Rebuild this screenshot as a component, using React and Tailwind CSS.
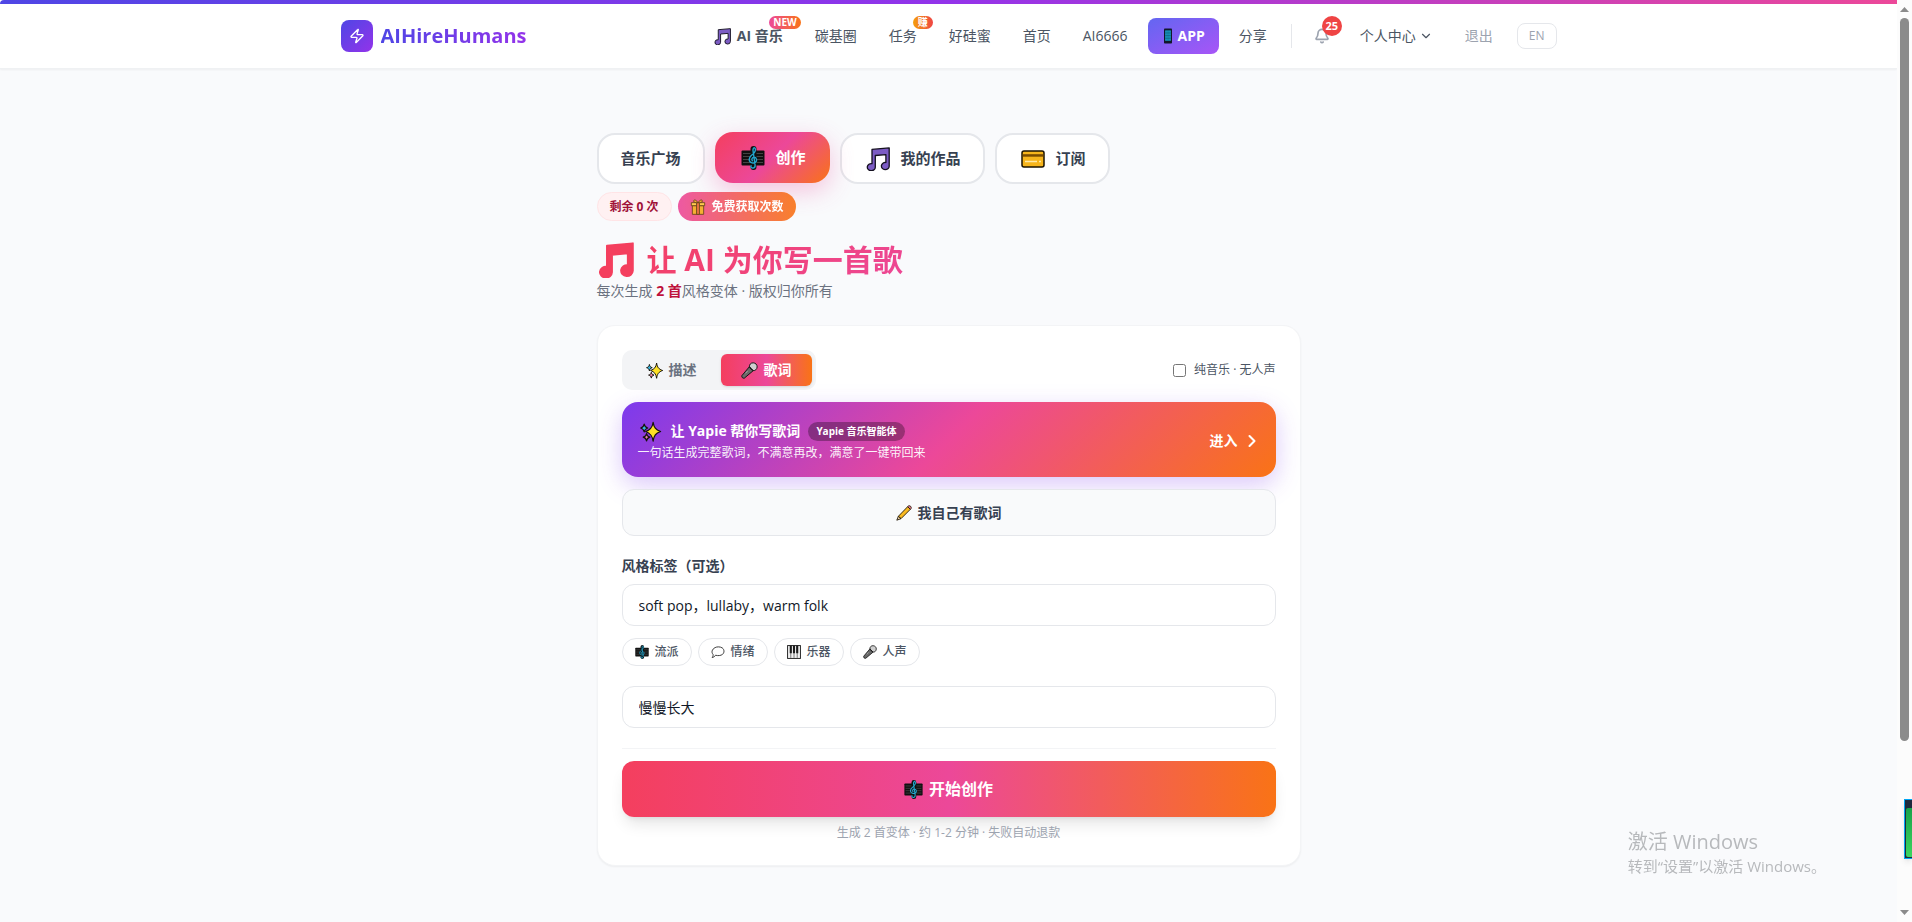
import React, { useState } from 'react';
import { Bell, ChevronDown, ChevronRight, Zap } from 'lucide-react';

/* ---------- icons ---------- */

const NotesIcon = ({ className, fill = '#7c5cc4', stroke = '#14101f' }) => (
  <svg viewBox="0 0 24 24" className={className} fill={fill} stroke={stroke} strokeWidth="1.3" strokeLinejoin="round" aria-hidden="true">
    <path d="M6 2.4 23.2.9v18.3a3.9 3.6 0 1 1-3.3-3.7V7.6L9.3 8.5v11.7a4 3.6 0 1 1-3.3-3.6z" />
  </svg>
);

const ScoreIcon = ({ className }) => (
  <svg viewBox="0 0 24 24" className={className} fill="none" aria-hidden="true">
    <rect x=".5" y="4.5" width="23" height="15" rx="1" fill="#101010" />
    <path d="M2 7.5h20M2 10.5h20M2 13.5h20M2 16.5h20" stroke="#4a4a4a" strokeWidth=".9" />
    <path d="M12.5 3v18" stroke="#101010" strokeWidth="6" strokeLinecap="round" />
    <path
      d="M12.4 22c-2 .3-3-1-2.3-2.2M12.4 22c1.5-.3 1.9-1.4 1.7-3L12 4.5C11.8 2.5 13 1.4 13.9 2c1.2 1.2.5 4.2-2.2 6.3-3 2.4-4 4.3-3.3 6.4.8 2.3 4.3 3.1 6.2 1.5 1.9-1.7.9-4.9-1.5-4.9-2 0-2.9 2-1.7 3.4"
      stroke="#22a6cc"
      strokeWidth="1.4"
      strokeLinecap="round"
    />
  </svg>
);

const CardIcon = ({ className }) => (
  <svg viewBox="0 0 24 24" className={className} aria-hidden="true">
    <rect x="1" y="4" width="22" height="16" rx="2" fill="#f7b51b" stroke="#1c1300" strokeWidth="1.5" />
    <path d="M1.8 7.2h20.4v2.5H1.8z" fill="#7a4c00" />
    <path d="M4 14.5h12M18 14.5h2" stroke="#ffe9a8" strokeWidth="1.5" />
  </svg>
);

const GiftIcon = ({ className }) => (
  <svg viewBox="0 0 24 24" className={className} stroke="#5a3200" strokeWidth="1.3" aria-hidden="true">
    <path d="M3.5 10h17v13h-17z" fill="#f5a81c" />
    <path d="M2 5.5h20V10H2z" fill="#ffc63d" />
    <path d="M9.8 5.5h4.4V23H9.8z" fill="#e8632c" />
    <path d="M12 5.5C9 .5 5 .5 5.5 3.5 6 5.3 9 5.5 12 5.5zm0 0c3-5 7-5 6.500-2C18 5.3 15 5.5 12 5.500z" fill="#f5a81c" />
  </svg>
);

const SparklesIcon = ({ className }) => (
  <svg viewBox="0 0 24 24" className={className} stroke="#16130a" strokeWidth="1.4" strokeLinejoin="round" aria-hidden="true">
    <path d="M15 1.5c1 6 2.8 8.5 8.5 10.5-5.7 2-7.5 4.7-8.5 11-1-6.3-3-9-8.5-11C12 10 14 7.500 15 1.500z" fill="#fde025" />
    <path d="M4.8 3.5c.5 2.8 1.5 3.800 4 4.500-2.500.8-3.500 1.800-4 4.500-.5-2.700-1.500-3.700-4-4.500 2.500-.7 3.500-1.700 4-4.500z" fill="#35b8e6" />
    <path d="M7.5 14.5c.4 2.500 1.400 3.300 3.800 4-2.400.7-3.400 1.600-3.800 4.200-.4-2.600-1.400-3.500-3.800-4.200 2.400-.7 3.400-1.500 3.800-4z" fill="#f07fa8" />
  </svg>
);

const MicIcon = ({ className }) => (
  <svg viewBox="0 0 24 24" className={className} stroke="#141414" strokeWidth="1.4" strokeLinejoin="round" aria-hidden="true">
    <path d="M12 6.5 1.2 19.3c-.5 2.3 1.2 4 3.5 3.5L17.5 12z" fill="#6a6a6a" />
    <path d="M12 6.8C11.5 3.5 14 1 17.3 1.2c3.3.2 5.5 2.5 5.5 5.7-.2 3.3-2.7 5.7-5.6 5.200z" fill="#cfcfcf" />
    <path d="M12 6.8c1 2.5 2.6 4.200 5.200 5.300" fill="none" />
    <path d="m9.5 12.500-3 3.500" stroke="#a3a3a3" />
  </svg>
);

const PencilIcon = ({ className }) => (
  <svg viewBox="0 0 24 24" className={className} stroke="#1c1405" strokeWidth="1.3" strokeLinejoin="round" aria-hidden="true">
    <path d="M3.5 17 17.5 2.5l4 4L7.5 20.5z" fill="#f9b91f" />
    <path d="m17.5 2.5 1-1c2.500-1.500 5.500 1.500 4 4l-1 1z" fill="#ee7f93" />
    <path d="m3.5 17-2.300 5.800 6.300-2.300z" fill="#f1d3a5" />
  </svg>
);

const BubbleIcon = ({ className }) => (
  <svg viewBox="0 0 24 24" className={className} fill="#fff" stroke="#303030" strokeWidth="1.6" strokeLinejoin="round" aria-hidden="true">
    <path d="M7 4.500c3-1.800 9-1.800 12.300.5 3.700 2.800 4 8 .5 11-2.800 2.300-8 2.800-12 1.500-1 1.800-3 3.500-5.800 4 1.500-2 1.800-3.300 1.500-5.500C.3 12.700 1.500 7.300 7 4.500z" />
  </svg>
);

const PianoIcon = ({ className }) => (
  <svg viewBox="0 0 24 24" className={className} aria-hidden="true">
    <rect x="1" y="1" width="22" height="22" fill="#f1f1f1" stroke="#1b1b1b" strokeWidth="1.6" />
    <path d="M6.5 2v20M12 2v20M17.5 2v20" stroke="#444" strokeWidth="1.2" />
    <path d="M4.7 1h3.600v13H4.700zM10.200 1h3.600v13h-3.600zM15.700 1h3.600v13h-3.600z" fill="#1b1b1b" />
  </svg>
);

const PhoneIcon = ({ className }) => (
  <svg viewBox="0 0 12 20" className={className} aria-hidden="true">
    <rect x="1" y=".5" width="10" height="19" rx="1" fill="#10182b" />
    <rect x="2.5" y="3" width="7" height="13" fill="#18a5cf" />
    <path d="M2.5 6.2h7M2.5 9.5h7M2.5 12.8h7M4.8 3v13M7.2 3v13" stroke="#10506e" strokeWidth=".7" />
  </svg>
);

/* ---------- data ---------- */

const tabs = [
  { id: 'plaza', label: '音乐广场' },
  { id: 'create', label: '创作', Icon: ScoreIcon },
  { id: 'works', label: '我的作品', Icon: NotesIcon },
  { id: 'plan', label: '订阅', Icon: CardIcon },
];

const chips = [
  { label: '流派', Icon: ScoreIcon },
  { label: '情绪', Icon: BubbleIcon },
  { label: '乐器', Icon: PianoIcon },
  { label: '人声', Icon: MicIcon },
];

const navLink = 'relative px-3 py-2 text-[#4b5563]';

const Header = () => (
  <header className="bg-white border-b border-gray-200/60 shadow-xs">
    <div className="h-1 rounded-tl-md bg-linear-to-r/srgb from-[#4f46e5] via-[#9333ea] to-[#ec4899]" />
    <div className="max-w-7xl h-16 mx-auto px-8 flex items-center justify-between">
      <a href="#" className="flex items-center gap-2">
        <span className="w-8 h-8 rounded-lg bg-linear-to-br/srgb from-[#4f46e5] to-[#9333ea] flex items-center justify-center">
          <Zap size={16} className="text-white" />
        </span>
        <span className="text-xl leading-8 font-bold bg-linear-to-r/srgb from-[#4f46e5] to-[#9333ea] bg-clip-text text-transparent">
          AIHireHumans
        </span>
      </a>

      <nav className="flex items-center text-sm leading-5 whitespace-nowrap">
        <div className="flex items-center gap-2">
          <a href="#" className={`${navLink} flex items-center gap-[6px] font-bold`}>
            <NotesIcon className="w-[17px] h-[17px]" />
            AI 音乐
            <span className="absolute right-[-6px] top-[-2px] h-[13px] px-1 rounded-full bg-linear-to-r/srgb from-[#ec4899] to-[#f97316] text-white text-[10px] leading-[13px] font-bold">
              NEW
            </span>
          </a>
          <a href="#" className={navLink}>碳基圈</a>
          <a href="#" className={navLink}>
            任务
            <span className="absolute right-[-4px] top-[-2px] h-[13px] px-[5px] rounded-full bg-linear-to-r/srgb from-[#f59e0b] to-[#ef4444] text-white text-[10px] leading-[13px] font-bold">
              赚
            </span>
          </a>
          <a href="#" className={navLink}>好硅蜜</a>
          <a href="#" className={navLink}>首页</a>
          <a href="#" className={navLink}>AI6666</a>
          <a href="#" className="h-9 px-[14px] rounded-lg bg-linear-to-br/srgb from-[#6366f1] to-[#a855f7] text-white font-bold flex items-center gap-1">
            <PhoneIcon className="w-3 h-4" />
            APP
          </a>
          <a href="#" className={navLink}>分享</a>
        </div>
        <div className="ml-3 pl-[22px] h-6 border-l border-gray-200 flex items-center">
          <button type="button" aria-label="通知" className="relative text-[#9ca3af]">
            <Bell size={16} strokeWidth={2.5} />
            <span className="absolute left-2 top-[-12px] w-5 h-5 rounded-full bg-[#ef4444] text-white text-[11px] leading-5 font-bold text-center">
              25
            </span>
          </button>
          <button type="button" className="ml-[30px] flex items-center gap-[3px] text-[#4b5563]">
            个人中心
            <ChevronDown size={14} />
          </button>
          <button type="button" className="ml-8 text-[#9ca3af]">退出</button>
          <button type="button" className="ml-6 h-[26px] px-[11px] rounded-lg border border-gray-200 text-xs text-[#9ca3af]">
            EN
          </button>
        </div>
      </nav>
    </div>
  </header>
);

const Scrollbar = () => (
  <div className="w-[15px] h-screen shrink-0 bg-[#fcfcfc] flex flex-col items-center justify-between py-[7px]">
    <svg viewBox="0 0 9 5" className="w-[9px] h-[5px]" fill="#8b8b8b"><path d="M4.5 0 9 5H0z" /></svg>
    <div className="flex-1 mt-[6px] w-[9px]">
      <div className="h-[81%] rounded-full bg-[#8b8b8b]" />
    </div>
    <svg viewBox="0 0 9 5" className="w-[9px] h-[5px]" fill="#8b8b8b"><path d="M0 0h9L4.5 5z" /></svg>
  </div>
);

const App = () => {
  const [tab, setTab] = useState('create');
  const [mode, setMode] = useState('lyrics');
  const [instrumental, setInstrumental] = useState(false);
  const [style, setStyle] = useState('soft pop，lullaby，warm folk');
  const [title, setTitle] = useState('慢慢长大');

  const modeClass = (id) =>
    `h-8 px-5 rounded-md flex items-center gap-[6px] text-sm font-bold ${
      mode === id
        ? 'bg-linear-to-r/srgb from-[#f43f5e] via-[#ec4899] to-[#f97316] text-white shadow-sm'
        : 'text-[#6b7280]'
    }`;

  return (
    <div className="flex h-screen overflow-hidden bg-[#f9fafc] font-['Open_Sans','Noto_Sans_CJK_SC',sans-serif]">
      <div className="flex-1 min-w-0">
        <Header />

        <main className="max-w-3xl mx-auto px-8 pt-16">
          <div className="flex gap-[10px]">
            {tabs.map(({ id, label, Icon }) => (
              <button
                key={id}
                type="button"
                onClick={() => setTab(id)}
                className={`h-[51px] rounded-[18px] flex items-center gap-[9px] text-[15px] font-bold ${
                  tab === id
                    ? 'px-6 -translate-y-px bg-linear-135/srgb from-[#f43f5e] via-[#ec4899] to-[#f97316] text-white shadow-[0_8px_24px_rgba(236,72,153,0.3)]'
                    : 'px-[22px] border-2 border-gray-200 bg-white text-[#374151]'
                }`}
              >
                {Icon && (
                  <span className="w-7 flex justify-center">
                    <Icon className="w-6 h-6" />
                  </span>
                )}
                {label}
              </button>
            ))}
          </div>

          <div className="mt-2 flex gap-[6px] text-xs font-bold">
            <span className="h-[29px] px-3 rounded-full border border-[#ffe4e6] bg-[#fff1f2] text-[#9f1239] flex items-center">
              剩余 0 次
            </span>
            <button type="button" className="h-[29px] px-3 rounded-full bg-linear-to-r/srgb from-[#ec4899] to-[#f97316] text-white opacity-90 flex items-center gap-[6px]">
              <GiftIcon className="w-4 h-4" />
              免费获取次数
            </button>
          </div>

          <h1 className="mt-5 text-3xl leading-[38px] font-bold flex items-center gap-3 bg-linear-135/srgb from-[#f43f5e] via-[#ec4899] to-[#f97316] bg-clip-text text-transparent">
            <NotesIcon className="w-[38px] h-9" fill="#f43f5e" stroke="#f43f5e" />
            让 AI 为你写一首歌
          </h1>
          <p className="text-sm leading-6 text-[#6b7280]">
            每次生成 <strong className="text-[#be123c]">2 首</strong>风格变体 · 版权归你所有
          </p>

          <section className="mt-[22px] p-6 rounded-[18px] border border-gray-100 bg-white shadow-xs">
            <div className="flex items-center justify-between">
              <div className="p-1 rounded-[10px] bg-[#f3f4f6] flex gap-1">
                <button type="button" onClick={() => setMode('describe')} className={modeClass('describe')}>
                  <SparklesIcon className="w-[17px] h-[17px]" />
                  描述
                </button>
                <button type="button" onClick={() => setMode('lyrics')} className={modeClass('lyrics')}>
                  <MicIcon className="w-[17px] h-[17px]" />
                  歌词
                </button>
              </div>
              <label className="flex items-center gap-2 text-xs text-[#4b5563]">
                <input
                  type="checkbox"
                  className="w-[13px] h-[13px]"
                  checked={instrumental}
                  onChange={(e) => setInstrumental(e.target.checked)}
                />
                纯音乐 · 无人声
              </label>
            </div>

            <button
              type="button"
              className="mt-3 w-full pt-[17px] pb-[15px] pl-4 pr-[14px] rounded-2xl bg-linear-135/srgb from-[#7c3aed] via-[#ec4899] to-[#f97316] text-white text-left flex items-center justify-between shadow-[0_8px_24px_rgba(124,58,237,0.28)]"
            >
              <span>
                <span className="h-6 flex items-center gap-2 text-sm font-bold">
                  <SparklesIcon className="w-[25px] h-[21px]" />
                  让 Yapie 帮你写歌词
                  <span className="h-[19px] px-2 rounded-full bg-black/30 text-[10px] leading-[19px]">Yapie 音乐智能体</span>
                </span>
                <span className="block text-xs leading-[19px] text-white/95">
                  一句话生成完整歌词，不满意再改，满意了一键带回来
                </span>
              </span>
              <span className="flex items-center gap-1 text-sm font-bold">
                进入
                <ChevronRight size={20} strokeWidth={2.5} />
              </span>
            </button>

            <button
              type="button"
              className="mt-3 w-full h-[47px] rounded-xl border border-gray-200 bg-[#f9fafb] text-sm font-bold text-[#374151] flex items-center justify-center gap-[6px]"
            >
              <PencilIcon className="w-4 h-4" />
              我自己有歌词
            </button>

            <label htmlFor="style-tags" className="mt-5 block text-sm leading-5 font-bold text-[#374151]">
              风格标签（可选）
            </label>
            <input
              id="style-tags"
              type="text"
              value={style}
              onChange={(e) => setStyle(e.target.value)}
              className="mt-2 block w-full h-[42px] px-4 rounded-xl border border-gray-200 bg-white text-sm text-[#111827] outline-none focus:border-pink-400"
            />

            <div className="mt-3 flex gap-[6px]">
              {chips.map(({ label, Icon }) => (
                <button
                  key={label}
                  type="button"
                  className="h-7 px-3 rounded-full border border-gray-200 bg-white text-xs font-medium text-[#4b5563] flex items-center gap-[6px]"
                >
                  <Icon className="w-[14px] h-[14px]" />
                  {label}
                </button>
              ))}
            </div>

            <input
              type="text"
              aria-label="歌名"
              value={title}
              onChange={(e) => setTitle(e.target.value)}
              className="mt-5 block w-full h-[42px] px-4 rounded-xl border border-gray-200 bg-white text-sm text-[#111827] outline-none focus:border-pink-400"
            />

            <div className="mt-5 pt-3 border-t border-gray-100">
              <button
                type="button"
                className="w-full h-14 rounded-xl bg-linear-to-r/srgb from-[#f43f5e] via-[#ec4899] to-[#f97316] text-white text-base font-bold flex items-center justify-center gap-[6px] shadow-lg"
              >
                <ScoreIcon className="w-[19px] h-[19px]" />
                开始创作
              </button>
              <p className="mt-2 text-center text-xs leading-4 text-[#9ca3af]">
                生成 2 首变体 · 约 1-2 分钟 · 失败自动退款
              </p>
            </div>
          </section>
        </main>
      </div>

      <Scrollbar />

      {/* system overlays */}
      <div className="fixed right-[86px] bottom-[46px] text-[#b7b9bc] pointer-events-none whitespace-nowrap">
        <p className="text-xl leading-7">激活 Windows</p>
        <p className="text-[15px] leading-5">转到“设置”以激活 Windows。</p>
      </div>
      <div className="fixed right-0 bottom-[63px] w-2 h-[60px] border border-r-0 border-sky-500 bg-slate-800 pt-2 pl-px pb-px shadow-md">
        <div className="h-full rounded-l-xs bg-linear-to-b from-[#16a34a] to-[#3bd65f]" />
      </div>
    </div>
  );
};

export default App;
